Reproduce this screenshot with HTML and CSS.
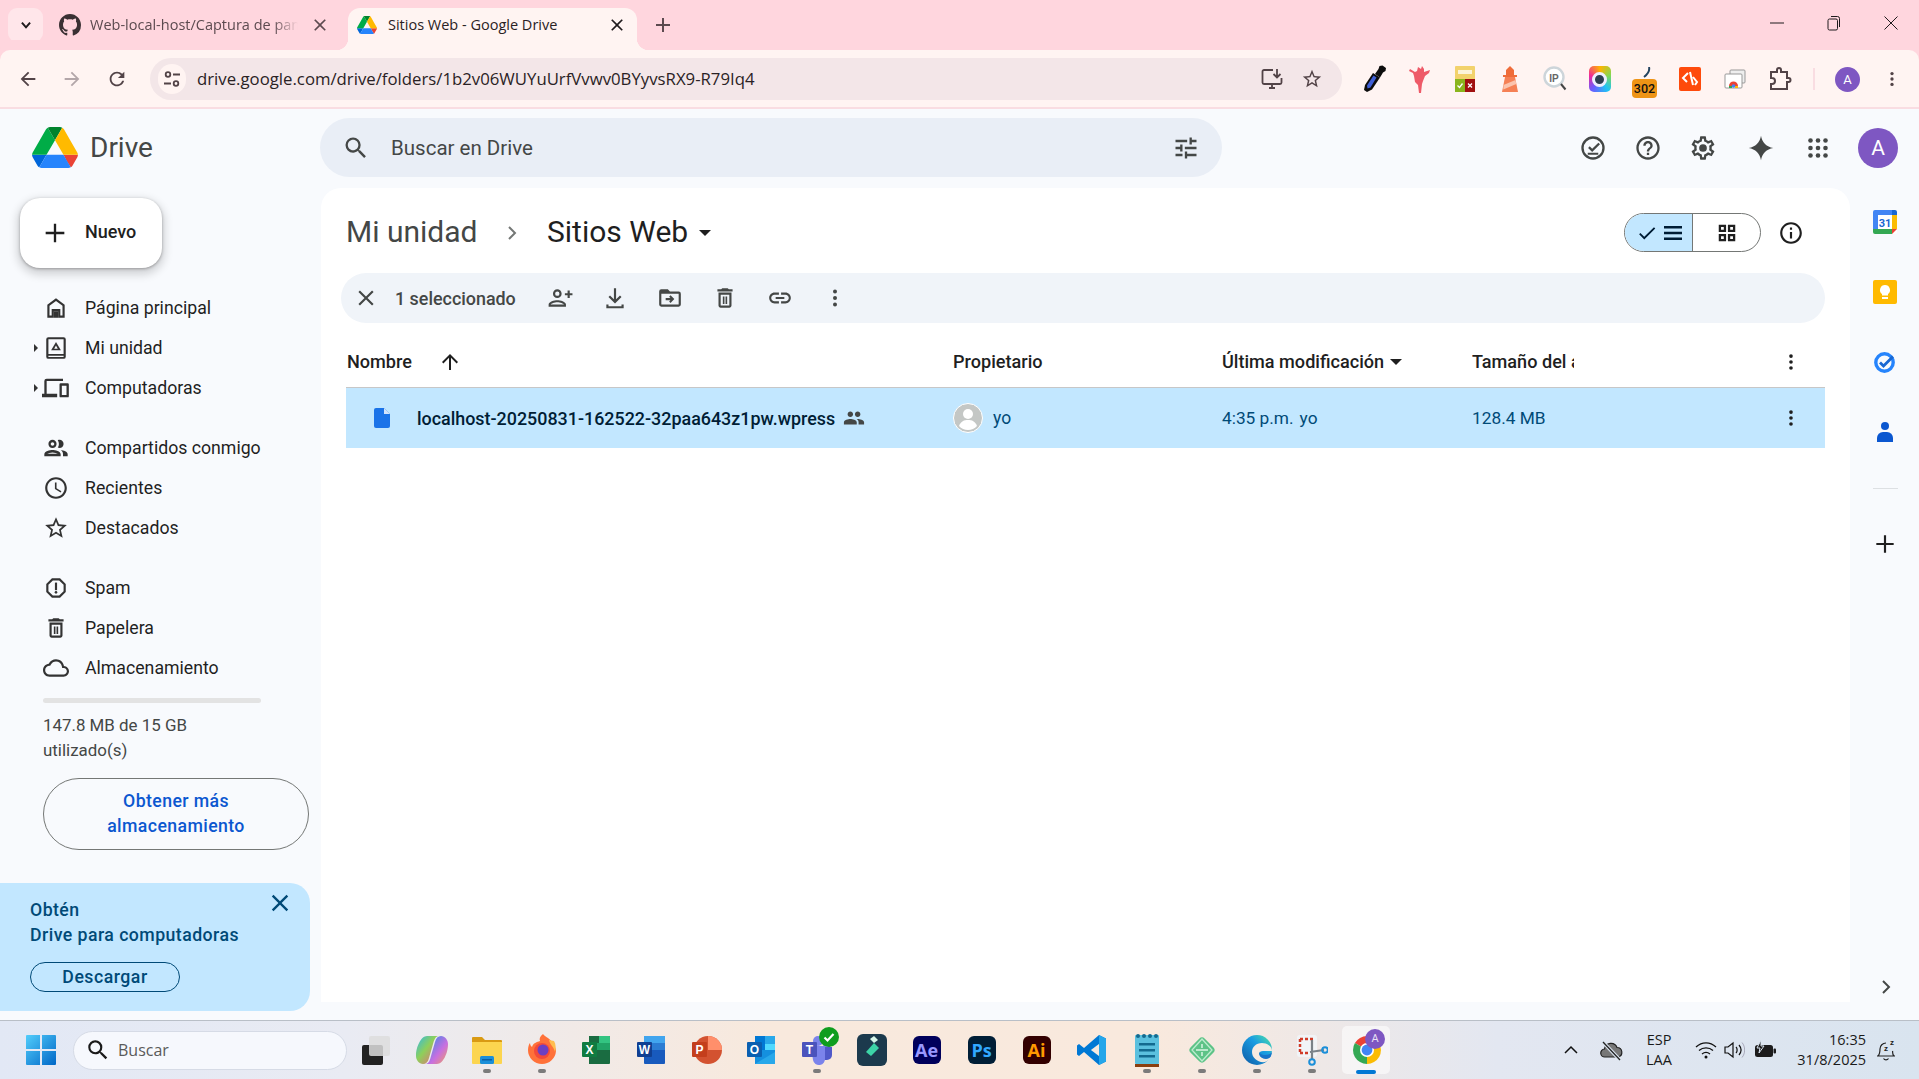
FILE: index.html
```html
<!DOCTYPE html>
<html lang="es">
<head>
<meta charset="utf-8">
<title>Sitios Web - Google Drive</title>
<link rel="stylesheet" href="styles.css">
</head>
<body>
<svg class="defs" aria-hidden="true">
  <symbol id="i-x" viewBox="0 0 24 24"><path d="M19 6.41 17.59 5 12 10.59 6.41 5 5 6.41 10.59 12 5 17.59 6.41 19 12 13.41 17.59 19 19 17.59 13.41 12z"/></symbol>
  <symbol id="i-vert" viewBox="0 0 24 24"><circle cx="12" cy="5.5" r="2"/><circle cx="12" cy="12" r="2"/><circle cx="12" cy="18.5" r="2"/></symbol>
  <symbol id="i-search" viewBox="0 0 24 24"><path d="M15.5 14h-.79l-.28-.27A6.471 6.471 0 0 0 16 9.5 6.5 6.5 0 1 0 9.5 16c1.61 0 3.09-.59 4.23-1.57l.27.28v.79l5 4.99L20.49 19l-4.99-5zm-6 0C7.01 14 5 11.99 5 9.5S7.01 5 9.5 5 14 7.01 14 9.5 11.99 14 9.5 14z"/></symbol>
  <symbol id="i-drive" viewBox="0 0 87.3 78"><path d="m6.6 66.85 3.85 6.65c.8 1.4 1.95 2.5 3.3 3.3l13.75-23.8h-27.5c0 1.55.4 3.1 1.2 4.5z" fill="#0066da"/><path d="m43.65 25-13.75-23.8c-1.35.8-2.5 1.9-3.3 3.3l-25.4 44a9.06 9.06 0 0 0 -1.2 4.5h27.5z" fill="#00ac47"/><path d="m73.55 76.8c1.35-.8 2.5-1.9 3.3-3.3l1.6-2.75 7.65-13.25c.8-1.4 1.2-2.95 1.2-4.5h-27.502l5.852 11.5z" fill="#ea4335"/><path d="m43.65 25 13.75-23.8c-1.35-.8-2.9-1.2-4.5-1.2h-18.5c-1.6 0-3.15.45-4.5 1.2z" fill="#00832d"/><path d="m59.8 53h-32.3l-13.75 23.8c1.35.8 2.9 1.2 4.5 1.2h50.8c1.6 0 3.15-.45 4.5-1.2z" fill="#2684fc"/><path d="m73.4 26.5-12.7-22c-.8-1.4-1.95-2.5-3.3-3.3l-13.75 23.8 16.15 28h27.45c0-1.55-.4-3.1-1.2-4.5z" fill="#ffba00"/></symbol>
  <symbol id="i-chrome" viewBox="0 0 32 32"><path d="M16 16 3.9 9A14 14 0 0 1 28.1 9Z" fill="#ea4335"/><path d="M16 16 28.1 9A14 14 0 0 1 16 30Z" fill="#fbbc04"/><path d="M16 16 16 30A14 14 0 0 1 3.9 9Z" fill="#34a853"/><circle cx="16" cy="16" r="7" fill="#fff"/><circle cx="16" cy="16" r="5.4" fill="#4285f4"/></symbol>
</svg>

<div class="tabstrip">
  <div class="tab-list-btn"><svg width="14" height="14" viewBox="0 0 24 24" class="stroke-dark"><path d="M5 8l7 8 7-8" fill="none" stroke-width="3.4"/></svg></div>
  <div class="tab tab-idle">
    <svg class="tab-icon" width="22" height="22" viewBox="0 0 16 16"><path fill="#3a3033" d="M8 0C3.58 0 0 3.58 0 8c0 3.54 2.29 6.53 5.47 7.59.4.07.55-.17.55-.38 0-.19-.01-.82-.01-1.49-2.01.37-2.53-.49-2.69-.94-.09-.23-.48-.94-.82-1.13-.28-.15-.68-.52-.01-.53.63-.01 1.08.58 1.23.82.72 1.21 1.87.87 2.33.66.07-.52.28-.87.51-1.07-1.78-.2-3.64-.89-3.64-3.95 0-.87.31-1.59.82-2.15-.08-.2-.36-1.02.08-2.12 0 0 .67-.21 2.2.82.64-.18 1.32-.27 2-.27s1.36.09 2 .27c1.53-1.04 2.2-.82 2.2-.82.44 1.1.16 1.92.08 2.12.51.56.82 1.27.82 2.15 0 3.07-1.87 3.75-3.65 3.95.29.25.54.73.54 1.48 0 1.07-.01 1.93-.01 2.2 0 .21.15.46.55.38A8.01 8.01 0 0 0 16 8c0-4.42-3.58-8-8-8z"/></svg>
    <span class="tab-title tab-title-fade">Web-local-host/Captura de pantalla</span>
    <svg class="tab-close fill-muted" width="20" height="20"><use href="#i-x"/></svg>
  </div>
  <div class="tab tab-active">
    <svg class="tab-icon-sm" width="20" height="18"><use href="#i-drive"/></svg>
    <span class="tab-title">Sitios Web - Google Drive</span>
    <svg class="tab-close fill-dark" width="20" height="20"><use href="#i-x"/></svg>
  </div>
  <svg class="new-tab fill-muted" width="24" height="24" viewBox="0 0 24 24"><path d="M13 5h-2v6H5v2h6v6h2v-6h6v-2h-6z"/></svg>
  <div class="win-controls">
    <svg width="16" height="16" viewBox="0 0 16 16" class="stroke-dark"><path d="M1 8h14" fill="none"/></svg>
    <svg width="16" height="16" viewBox="0 0 16 16" class="stroke-dark"><rect x="2" y="4" width="9.5" height="11" rx="1.5" fill="none"/><path d="M5 1.5h6.500a2 2 0 0 1 2 2V12" fill="none"/></svg>
    <svg width="16" height="16" viewBox="0 0 16 16" class="stroke-dark"><path d="M1.500 1.500l13 13M14.500 1.500l-13 13" fill="none"/></svg>
  </div>
</div>

<div class="toolbar">
  <div class="nav-btn"><svg width="22" height="22" viewBox="0 0 24 24" class="fill-chrome"><path d="M20 11H7.830l5.590-5.590L12 4l-8 8 8 8 1.410-1.410L7.830 13H20z"/></svg></div>
  <div class="nav-btn"><svg width="22" height="22" viewBox="0 0 24 24" class="fill-disabled"><path d="M12 4l-1.410 1.410L16.170 11H4v2h12.170l-5.580 5.590L12 20l8-8z"/></svg></div>
  <div class="nav-btn nav-reload"><svg width="22" height="22" viewBox="0 0 24 24" class="fill-chrome"><path d="M17.650 6.350A7.958 7.958 0 0 0 12 4c-4.420 0-7.990 3.580-7.990 8s3.570 8 7.990 8c3.730 0 6.840-2.550 7.730-6h-2.080A5.990 5.990 0 0 1 12 18c-3.310 0-6-2.690-6-6s2.690-6 6-6c1.660 0 3.140.690 4.220 1.780L13 11h7V4l-2.350 2.350z"/></svg></div>
  <div class="omnibox">
    <div class="site-info"><svg width="20" height="20" viewBox="0 0 20 20" class="stroke-chrome"><circle cx="6" cy="5.500" r="2.300" fill="none"/><path d="M11 5.500h7M2 14.500h7" fill="none"/><circle cx="14" cy="14.500" r="2.300" fill="none"/></svg></div>
    <span class="url">drive.google.com/drive/folders/1b2v06WUYuUrfVvwv0BYyvsRX9-R79Iq4</span>
    <div class="omni-btn"><svg width="24" height="24" viewBox="0 0 24 24" class="stroke-chrome"><path d="M13 3H4a1.500 1.500 0 0 0-1.500 1.500v11A1.500 1.500 0 0 0 4 17h16a1.500 1.500 0 0 0 1.500-1.500V11M9 21h6M12 17v4M17 2v8M13.500 7l3.500 3.500L20.500 7" fill="none"/></svg></div>
    <div class="omni-btn"><svg width="22" height="22" viewBox="0 0 24 24" class="fill-chrome"><path d="M22 9.240l-7.190-.620L12 2 9.190 8.630 2 9.240l5.460 4.730L5.820 21 12 17.270 18.180 21l-1.630-7.030L22 9.240zM12 15.400l-3.760 2.270 1-4.280-3.320-2.880 4.380-.380L12 6.100l1.710 4.040 4.380.380-3.320 2.880 1 4.280L12 15.400z"/></svg></div>
  </div>
  <div class="extensions">
    <div class="ext"><svg width="26" height="28" viewBox="0 0 26 28"><path d="M5 27l-3-2 1-5 8-12 7 4.500-8 12z" fill="#0d0d0d"/><path d="M5.500 23.500l-.5-3 6.500-10 3 2-6 10z" fill="#3f5fd6"/><path d="M13 9l3.500-5 1-3 3-.5 3.500 2.500-.5 3-2.500 1.500-3 5z" fill="#0d0d0d"/></svg></div>
    <div class="ext"><svg width="24" height="28" viewBox="0 0 24 28"><path d="M2 4l5 3 2-1 1-4 3 2 1-3 2 3v3l6-2-1 3-4 3-2 5-1 3-1 9h-2l-1-8-3-3-1-6-1-3-4-2z" fill="#ee5a68"/></svg></div>
    <div class="ext"><svg width="20" height="26" viewBox="0 0 20 26"><rect y="0" width="20" height="26" rx="1" fill="#f2d26c"/><rect y="13" width="10" height="13" fill="#8ab51d"/><rect x="10" y="13" width="10" height="13" fill="#a01010"/><path d="M2.500 19.500l2 2 3-4" stroke="#fff" stroke-width="1.300" fill="none"/><path d="M13 17.500l4 4m0-4l-4 4" stroke="#fff" stroke-width="1.300"/><rect x="3" y="4" width="14" height="4" fill="#fff" opacity=".75"/></svg></div>
    <div class="ext"><svg width="18" height="26" viewBox="0 0 18 26"><path d="M9 0l4 4v5H5V4z" fill="#ef6c3a"/><path d="M2 9h14v2H2z" fill="#ef6c3a"/><path d="M4 11h10l3 15H1z" fill="#f58055"/><path d="M2.500 19l12-5 .8 4-13 5.500z" fill="#fbc4ae"/></svg></div>
    <div class="ext"><svg width="24" height="28" viewBox="0 0 24 28"><circle cx="11" cy="12" r="9.500" fill="#fff" stroke="#cdd5da" stroke-width="2.400"/><text x="11" y="16.500" class="ext-ip">IP</text><path d="M18 19l4.500 5.500" stroke="#444" stroke-width="2"/></svg></div>
    <div class="ext"><div class="ext-lens"><span class="ext-lens-in"></span></div></div>
    <div class="ext ext-redirect">
      <svg width="12" height="12" viewBox="0 0 12 12"><path d="M8 0c1 4-1 7-5 10" stroke="#23435f" stroke-width="2" fill="none"/></svg>
      <span class="ext-302">302</span>
    </div>
    <div class="ext"><svg width="22" height="24" viewBox="0 0 22 24"><rect width="22" height="24" rx="2" fill="#fe4a0b"/><path d="M9 6L4 11l4 4M11 5l3 13M14 10l4 5-2 3" stroke="#fff" stroke-width="2" fill="none"/></svg></div>
    <div class="ext"><svg width="22" height="22" viewBox="0 0 22 22"><rect x="6" y="2" width="15" height="13" rx="1" fill="#eee" stroke="#999"/><rect x="1" y="6" width="17" height="14" rx="1" fill="#fff" stroke="#999"/><path d="M5 18a4.500 4.500 0 0 1 9 0z" fill="#ea4335"/><path d="M5 18h3v2H5z" fill="#34a853"/><path d="M11 18h3v2h-3z" fill="#fbbc04"/><circle cx="9.500" cy="18" r="1.800" fill="#4285f4"/></svg></div>
    <div class="ext"><svg width="24" height="26" viewBox="0 0 24 26" class="stroke-ext"><path d="M3 6h6V4a2 2 0 0 1 4 0v2h6v6h1.500a2 2 0 0 1 0 4H19v7H3v-5h1a3 3 0 0 0 0-6H3z" fill="none" stroke-width="2"/></svg></div>
  </div>
  <span class="tb-sep"></span>
  <span class="avatar-sm">A</span>
  <svg class="tb-more fill-chrome" width="20" height="20"><use href="#i-vert"/></svg>
</div>

<div class="drive">
  <header class="topbar">
    <div class="brand">
      <svg class="brand-logo" width="46" height="41"><use href="#i-drive"/></svg>
      <span class="brand-name">Drive</span>
    </div>
    <div class="search">
      <svg class="fill-icon" width="28" height="28"><use href="#i-search"/></svg>
      <span class="search-text">Buscar en Drive</span>
      <svg class="fill-icon" width="28" height="28" viewBox="0 0 24 24"><path d="M3 17v2h6v-2H3zM3 5v2h10V5H3zm10 16v-2h8v-2h-8v-2h-2v6h2zM7 9v2H3v2h4v2h2V9H7zm14 4v-2H11v2h10zm-6-4h2V7h4V5h-4V3h-2v6z"/></svg>
    </div>
    <div class="top-actions">
      <div class="act"><svg class="fill-icon" width="28" height="28" viewBox="0 0 24 24"><path d="M12 2a10 10 0 1 0 0 20 10 10 0 0 0 0-20zm0 18a8 8 0 1 1 0-16 8 8 0 0 1 0 16z"/><path d="M16.600 7.400l1.400 1.400-6.700 6.700-3.500-3.500 1.400-1.400 2.100 2.100zM7.500 16h9v1.800h-9z"/></svg></div>
      <div class="act"><svg class="fill-icon" width="28" height="28" viewBox="0 0 24 24"><path d="M11 18h2v-2h-2v2zm1-16C6.480 2 2 6.480 2 12s4.480 10 10 10 10-4.480 10-10S17.520 2 12 2zm0 18c-4.410 0-8-3.590-8-8s3.590-8 8-8 8 3.590 8 8-3.590 8-8 8zm0-14c-2.210 0-4 1.790-4 4h2c0-1.100.9-2 2-2s2 .9 2 2c0 2-3 1.750-3 5h2c0-2.250 3-2.500 3-5 0-2.210-1.790-4-4-4z"/></svg></div>
      <div class="act"><svg class="fill-icon" width="28" height="28" viewBox="0 0 24 24"><path d="M19.430 12.980c.04-.32.07-.64.07-.98 0-.34-.03-.66-.07-.98l2.110-1.650c.19-.15.24-.42.12-.64l-2-3.460c-.09-.16-.26-.25-.44-.25-.06 0-.12.01-.17.03l-2.490 1c-.52-.4-1.080-.73-1.690-.98l-.38-2.650C14.460 2.180 14.250 2 14 2h-4c-.25 0-.46.18-.49.42l-.38 2.650c-.61.25-1.170.59-1.690.98l-2.490-1c-.06-.02-.12-.03-.18-.03-.17 0-.34.09-.43.25l-2 3.460c-.13.22-.07.49.12.64l2.110 1.650c-.04.32-.07.65-.07.98 0 .33.03.66.07.98l-2.110 1.650c-.19.15-.24.42-.12.64l2 3.460c.09.16.26.25.44.25.06 0 .12-.01.17-.03l2.490-1c.52.4 1.080.73 1.690.98l.38 2.650c.03.24.24.42.49.42h4c.25 0 .46-.18.49-.42l.38-2.650c.61-.25 1.170-.59 1.690-.98l2.490 1c.06.02.12.03.18.03.17 0 .34-.09.43-.25l2-3.460c.12-.22.07-.49-.12-.64l-2.110-1.650zm-1.980-1.710c.04.31.05.52.05.73 0 .21-.02.43-.05.73l-.14 1.130.89.7 1.080.84-.7 1.210-1.270-.51-1.040-.42-.9.68c-.43.32-.84.56-1.250.73l-1.060.43-.16 1.130-.2 1.350h-1.400l-.19-1.350-.16-1.130-1.060-.43c-.43-.18-.83-.41-1.230-.71l-.91-.7-1.060.43-1.270.51-.7-1.210 1.080-.84.89-.7-.14-1.130c-.03-.31-.05-.54-.05-.74s.02-.43.05-.73l.14-1.130-.89-.7-1.080-.84.7-1.210 1.270.51 1.040.42.9-.68c.43-.32.84-.56 1.250-.73l1.060-.43.16-1.130.2-1.350h1.390l.19 1.350.16 1.130 1.060.43c.43.18.83.41 1.230.71l.91.7 1.060-.43 1.270-.51.7 1.210-1.070.85-.89.7.14 1.130z"/><circle cx="12" cy="12" r="3.300"/></svg></div>
      <div class="act act-wide"><svg class="fill-icon" width="28" height="28" viewBox="0 0 24 24"><path d="M12 1.500c.8 5.600 4.900 9.700 10.500 10.500-5.600.8-9.700 4.900-10.500 10.500C11.200 16.900 7.100 12.800 1.500 12 7.100 11.200 11.200 7.100 12 1.500z"/></svg></div>
      <div class="act act-narrow"><svg class="fill-icon" width="24" height="24" viewBox="0 0 24 24"><circle cx="4.500" cy="4.500" r="2.300"/><circle cx="12" cy="4.500" r="2.300"/><circle cx="19.500" cy="4.500" r="2.300"/><circle cx="4.500" cy="12" r="2.300"/><circle cx="12" cy="12" r="2.300"/><circle cx="19.500" cy="12" r="2.300"/><circle cx="4.500" cy="19.500" r="2.300"/><circle cx="12" cy="19.500" r="2.300"/><circle cx="19.500" cy="19.500" r="2.300"/></svg></div>
      <span class="avatar-lg">A</span>
    </div>
  </header>

  <div class="workspace">
    <aside class="sidebar">
      <div class="new-btn">
        <svg class="fill-title" width="28" height="28" viewBox="0 0 24 24"><path d="M13 4h-2v7H4v2h7v7h2v-7h7v-2h-7z"/></svg>
        <span class="new-label">Nuevo</span>
      </div>
      <nav class="nav-group">
        <div class="nav-item"><span class="nav-icon"><svg class="fill-icon2" width="26" height="26" viewBox="0 0 24 24"><path d="M12 3 4 9v12h6v-6h4v6h6V9l-8-6zm6 16h-2v-6H8v6H6v-9l6-4.500 6 4.500v9z"/><rect x="10" y="15" width="4" height="6"/></svg></span><span>Página principal</span></div>
        <div class="nav-item"><span class="nav-caret"></span><span class="nav-icon"><svg class="fill-icon2" width="26" height="26" viewBox="0 0 24 24"><path d="M19 2H5a2 2 0 0 0-2 2V20a2 2 0 0 0 2 2h14a2 2 0 0 0 2-2V4a2 2 0 0 0-2-2zm0 15.500H5V4h14v13.500zm0 2.800H5v-1.200h14v1.200z"/><path d="M12 6.500l4.500 7.500h-9z"/><path d="M12 9.800l-1.700 2.800h3.400z" fill="#f8fafd"/></svg></span><span>Mi unidad</span></div>
        <div class="nav-item"><span class="nav-caret"></span><span class="nav-icon"><svg class="fill-icon2" width="28" height="28" viewBox="0 0 24 24"><path d="M4 6h14V4H4a2 2 0 0 0-2 2v11H0v3h13v-3H4V6z"/><path d="M22 8h-6a1 1 0 0 0-1 1v10a1 1 0 0 0 1 1h6a1 1 0 0 0 1-1V9a1 1 0 0 0-1-1zm-1 10h-4v-8h4v8z"/></svg></span><span>Computadoras</span></div>
      </nav>
      <nav class="nav-group">
        <div class="nav-item"><span class="nav-icon"><svg class="fill-icon2" width="28" height="28" viewBox="0 0 24 24"><path d="M9 13.750c-2.340 0-7 1.170-7 3.500V19h14v-1.750c0-2.330-4.660-3.500-7-3.500zM4.340 17c.84-.58 2.870-1.250 4.660-1.250s3.820.67 4.660 1.250H4.340zM9 12c1.930 0 3.500-1.570 3.500-3.500S10.930 5 9 5 5.500 6.570 5.500 8.500 7.070 12 9 12zm0-5c.83 0 1.500.67 1.500 1.500S9.830 10 9 10s-1.500-.67-1.500-1.500S8.170 7 9 7zm7.040 6.810c1.160.84 1.960 1.960 1.960 3.440V19h4v-1.750c0-2.020-3.500-3.170-5.960-3.440zM15 12c1.930 0 3.500-1.570 3.500-3.500S16.930 5 15 5c-.54 0-1.040.13-1.500.35.63.89 1 1.980 1 3.150s-.37 2.260-1 3.150c.46.22.96.35 1.500.35z"/></svg></span><span>Compartidos conmigo</span></div>
        <div class="nav-item"><span class="nav-icon"><svg class="fill-icon2" width="26" height="26" viewBox="0 0 24 24"><path d="M11.990 2C6.470 2 2 6.480 2 12s4.470 10 9.990 10C17.520 22 22 17.520 22 12S17.520 2 11.990 2zM12 20c-4.420 0-8-3.580-8-8s3.580-8 8-8 8 3.580 8 8-3.580 8-8 8zm.5-13H11v6l5.250 3.150.75-1.230-4.500-2.670z"/></svg></span><span>Recientes</span></div>
        <div class="nav-item"><span class="nav-icon"><svg class="fill-icon2" width="26" height="26" viewBox="0 0 24 24"><path d="M22 9.240l-7.190-.62L12 2 9.190 8.630 2 9.240l5.460 4.730L5.820 21 12 17.270 18.180 21l-1.630-7.030L22 9.240zM12 15.400l-3.760 2.270 1-4.280-3.320-2.880 4.380-.38L12 6.100l1.710 4.040 4.380.38-3.320 2.880 1 4.280L12 15.400z"/></svg></span><span>Destacados</span></div>
      </nav>
      <nav class="nav-group">
        <div class="nav-item"><span class="nav-icon"><svg class="fill-icon2" width="26" height="26" viewBox="0 0 24 24"><path d="M15.730 3H8.270L3 8.270v7.460L8.270 21h7.460L21 15.730V8.270L15.730 3zM19 14.900 14.900 19H9.100L5 14.900V9.100L9.100 5h5.800L19 9.100v5.800z"/><circle cx="12" cy="16" r="1.200"/><rect x="11" y="7" width="2" height="7"/></svg></span><span>Spam</span></div>
        <div class="nav-item"><span class="nav-icon"><svg class="fill-icon2" width="26" height="26" viewBox="0 0 24 24"><path d="M6 19c0 1.100.9 2 2 2h8c1.100 0 2-.9 2-2V7H6v12zM8 9h8v10H8V9zm7.500-5l-1-1h-5l-1 1H5v2h14V4z"/><path d="M10 10.500h1.500v7H10zM12.500 10.500H14v7h-1.500z"/></svg></span><span>Papelera</span></div>
        <div class="nav-item"><span class="nav-icon"><svg class="fill-icon2" width="26" height="26" viewBox="0 0 24 24"><path d="M19.350 10.040C18.670 6.590 15.640 4 12 4 9.110 4 6.600 5.640 5.350 8.040 2.340 8.360 0 10.910 0 14c0 3.310 2.690 6 6 6h13c2.760 0 5-2.240 5-5 0-2.640-2.050-4.780-4.650-4.960zM19 18H6c-2.210 0-4-1.790-4-4 0-2.050 1.530-3.760 3.560-3.970l1.070-.11.5-.95C8.080 7.140 9.940 6 12 6c2.620 0 4.880 1.860 5.390 4.430l.3 1.500 1.530.11c1.560.1 2.780 1.410 2.780 2.960 0 1.650-1.350 3-3 3z"/></svg></span><span>Almacenamiento</span></div>
      </nav>
      <div class="storage-bar"></div>
      <p class="storage-text">147.8 MB de 15 GB utilizado(s)</p>
      <div class="storage-btn">Obtener más almacenamiento</div>
      <div class="promo">
        <div class="promo-head">
          <p class="promo-text">Obtén<br>Drive para computadoras</p>
          <svg class="promo-close fill-promo" width="28" height="28"><use href="#i-x"/></svg>
        </div>
        <div class="promo-btn">Descargar</div>
      </div>
    </aside>

    <main class="card">
      <div class="title-row">
        <span class="crumb">Mi unidad</span>
        <svg class="crumb-sep" width="24" height="24" viewBox="0 0 24 24"><path d="M9.300 6.700 10.700 5.300 17.400 12l-6.700 6.700-1.400-1.400L14.600 12z"/></svg>
        <span class="crumb-current">Sitios Web</span>
        <span class="caret caret-lg"></span>
        <div class="view-toggle">
          <div class="view-on">
            <svg width="22" height="22" viewBox="0 0 24 24" class="fill-navy"><path d="M9 16.200 4.800 12l-1.400 1.400L9 19 21 7l-1.400-1.400z"/></svg>
            <svg width="24" height="24" viewBox="0 0 24 24" class="fill-navy"><path d="M3 5h18v2.500H3zM3 10.700h18v2.500H3zM3 16.500h18V19H3z"/></svg>
          </div>
          <div class="view-off"><svg width="22" height="22" viewBox="0 0 24 24" class="fill-title"><path d="M3 3h8v8H3zm2.500 2.500v3h3v-3zM13 3h8v8h-8zm2.500 2.500v3h3v-3zM3 13h8v8H3zm2.500 2.500v3h3v-3zM13 13h8v8h-8zm2.500 2.500v3h3v-3z"/></svg></div>
        </div>
        <div class="info-btn"><svg width="26" height="26" viewBox="0 0 24 24" class="fill-title"><path d="M11 7h2v2h-2zm0 4h2v6h-2zm1-9C6.480 2 2 6.480 2 12s4.480 10 10 10 10-4.480 10-10S17.520 2 12 2zm0 18c-4.410 0-8-3.590-8-8s3.590-8 8-8 8 3.590 8 8-3.590 8-8 8z"/></svg></div>
      </div>

      <div class="select-bar">
        <svg class="sel-close fill-icon" width="26" height="26"><use href="#i-x"/></svg>
        <span class="sel-count">1 seleccionado</span>
        <div class="sel-act"><svg class="fill-icon" width="26" height="26" viewBox="0 0 24 24"><path d="M9.500 12a4 4 0 1 0 0-8 4 4 0 0 0 0 8zm0-6a2 2 0 1 1 0 4 2 2 0 0 1 0-4zM9.500 14c-2.700 0-8 1.300-8 4v2h16v-2c0-2.700-5.300-4-8-4zm-6 4c.2-.7 3.300-2 6-2s5.800 1.300 6 2z"/><path d="M19 5v2.500h-2.500v2H19V12h2V9.500h2.500v-2H21V5z"/></svg></div>
        <div class="sel-act"><svg class="fill-icon" width="26" height="26" viewBox="0 0 24 24"><path d="M11 3h2v10.200l3.600-3.600L18 11l-6 6-6-6 1.400-1.400 3.600 3.600z"/><path d="M4 18h2v1.500h12V18h2v3.500H4z"/></svg></div>
        <div class="sel-act"><svg class="fill-icon" width="26" height="26" viewBox="0 0 24 24"><path d="M20 6h-8l-2-2H4a2 2 0 0 0-2 2v12a2 2 0 0 0 2 2h16a2 2 0 0 0 2-2V8a2 2 0 0 0-2-2zm0 12H4V8h16v10z"/><path d="M12.500 9.500 16 13l-3.500 3.500-1.300-1.300 1.200-1.200H8v-2h4.400l-1.200-1.200z"/></svg></div>
        <div class="sel-act"><svg class="fill-icon" width="26" height="26" viewBox="0 0 24 24"><path d="M6 19c0 1.100.9 2 2 2h8c1.100 0 2-.9 2-2V7H6v12zM8 9h8v10H8V9zm7.500-5l-1-1h-5l-1 1H5v2h14V4z"/><path d="M10 10.500h1.500v7H10zM12.500 10.500H14v7h-1.500z"/></svg></div>
        <div class="sel-act"><svg class="fill-icon" width="26" height="26" viewBox="0 0 24 24"><path d="M3.900 12c0-1.710 1.390-3.100 3.100-3.100h4V7H7c-2.760 0-5 2.240-5 5s2.240 5 5 5h4v-1.900H7c-1.710 0-3.100-1.390-3.100-3.100zM8 13h8v-2H8v2zm9-6h-4v1.900h4c1.710 0 3.100 1.390 3.100 3.100s-1.390 3.100-3.100 3.100h-4V17h4c2.760 0 5-2.240 5-5s-2.240-5-5-5z"/></svg></div>
        <div class="sel-act"><svg class="fill-icon" width="24" height="24"><use href="#i-vert"/></svg></div>
      </div>

      <div class="table">
        <div class="t-row t-head">
          <div class="cell-name head-name"><span>Nombre</span><svg class="fill-title sort-up" width="24" height="24" viewBox="0 0 24 24"><path d="M11 20V7.800l-5.600 5.600L4 12l8-8 8 8-1.400 1.400L13 7.800V20z"/></svg></div>
          <div>Propietario</div>
          <div class="head-mod"><span>Última modificación</span><span class="caret"></span></div>
          <div class="head-size">Tamaño del almacenamiento</div>
          <svg class="row-more fill-title" width="22" height="22"><use href="#i-vert"/></svg>
        </div>
        <div class="t-row t-file">
          <div class="cell-name file-name">
            <svg class="file-icon" width="24" height="24" viewBox="0 0 24 24"><path d="M6 2a2 2 0 0 0-2 2v16a2 2 0 0 0 2 2h12a2 2 0 0 0 2-2V8l-6-6z" fill="#1a73e8"/><path d="M14 2l6 6h-6z" fill="#d2e3fc"/></svg>
            <span>localhost-20250831-162522-32paa643z1pw.wpress</span>
            <svg class="fill-icon shared-icon" width="24" height="24" viewBox="0 0 24 24"><path d="M16 11c1.660 0 2.990-1.340 2.990-3S17.660 5 16 5s-3 1.340-3 3 1.340 3 3 3zm-8 0c1.660 0 2.990-1.340 2.990-3S9.660 5 8 5 5 6.340 5 8s1.340 3 3 3zm0 2c-2.330 0-7 1.170-7 3.500V19h14v-2.500c0-2.330-4.670-3.500-7-3.500zm8 0c-.29 0-.62.020-.97.050 1.160.84 1.970 1.970 1.970 3.450V19h6v-2.500c0-2.330-4.670-3.500-7-3.500z"/></svg>
          </div>
          <div class="owner">
            <svg width="30" height="30" viewBox="0 0 30 30"><circle cx="15" cy="15" r="14.500" fill="#c4c7c5" stroke="#fff"/><circle cx="15" cy="11" r="5" fill="#fff"/><path d="M6 23c2-5 5-6 9-6s7 1 9 6a12 12 0 0 1-18 0z" fill="#fff"/></svg>
            <span>yo</span>
          </div>
          <div class="cell-meta"><span>4:35 p.m.</span><span class="meta-by">yo</span></div>
          <div class="cell-meta">128.4 MB</div>
          <svg class="row-more fill-title" width="22" height="22"><use href="#i-vert"/></svg>
        </div>
      </div>
    </main>

    <aside class="rail">
      <div class="rail-slot"><svg width="24" height="24" viewBox="0 0 24 24"><rect width="24" height="24" rx="2" fill="#fff"/><path d="M0 2a2 2 0 0 1 2-2h17v5H5v14H0z" fill="#4285f4"/><path d="M19 0h3a2 2 0 0 1 2 2v3h-5z" fill="#1967d2"/><path d="M19 5h5v14h-5z" fill="#fbbc04"/><path d="M5 19h14v5H2a2 2 0 0 1-2-2v-3h5z" fill="#34a853"/><path d="M19 19h5l-5 5z" fill="#ea4335"/><text x="12" y="16.500" class="cal-num">31</text></svg></div>
      <div class="rail-slot"><svg width="24" height="24" viewBox="0 0 24 24"><rect width="24" height="24" rx="2" fill="#ffba00"/><path d="M12 5a5 5 0 0 0-3 9v1.500h6V14a5 5 0 0 0-3-9z" fill="#fff"/><rect x="9" y="17" width="6" height="2" fill="#fff"/></svg></div>
      <div class="rail-slot"><svg width="24" height="24" viewBox="0 0 24 24"><circle cx="11.500" cy="12.500" r="8.700" fill="none" stroke="#2684fc" stroke-width="3.400"/><path d="M7 12.500l3.500 3.500L20 6.500" fill="none" stroke="#1967d2" stroke-width="2.800"/></svg></div>
      <div class="rail-slot"><svg width="24" height="24" viewBox="0 0 24 24"><circle cx="12" cy="6" r="4" fill="#0b57d0"/><path d="M4 22v-4a6 6 0 0 1 6-6h4a6 6 0 0 1 6 6v4z" fill="#0b57d0"/></svg></div>
      <span class="rail-sep"></span>
      <div class="rail-slot rail-plus"><svg width="26" height="26" viewBox="0 0 24 24" class="fill-title"><path d="M13 4h-2v7H4v2h7v7h2v-7h7v-2h-7z"/></svg></div>
      <svg class="rail-chev fill-icon" width="24" height="24" viewBox="0 0 24 24"><path d="M9.300 6.700 10.700 5.300 17.400 12l-6.700 6.700-1.400-1.400L14.600 12z"/></svg>
    </aside>
  </div>
</div>

<footer class="taskbar">
  <svg class="win-logo" width="30" height="30" viewBox="0 0 30 30">
    <defs><linearGradient id="win" x1="0" y1="0" x2="1" y2="1"><stop offset="0" stop-color="#52cdfb"/><stop offset="1" stop-color="#0067c7"/></linearGradient></defs>
    <path d="M1 0h13v14H0V1a1 1 0 0 1 1-1zM16 0h13a1 1 0 0 1 1 1v13H16zM0 16h14v14H1a1 1 0 0 1-1-1zM16 16h14v13a1 1 0 0 1-1 1H16z" fill="url(#win)"/>
  </svg>
  <div class="tb-search">
    <svg class="fill-black" width="26" height="26"><use href="#i-search"/></svg>
    <span>Buscar</span>
  </div>
  <div class="tb-apps">
    <div class="app"><svg width="32" height="32" viewBox="0 0 32 32"><rect x="1" y="11" width="21" height="20" rx="2" fill="#222"/><rect x="8" y="2" width="21" height="20" rx="2" fill="#ddd" opacity=".85"/></svg></div>
    <div class="app"><svg width="32" height="32" viewBox="0 0 32 32"><defs><linearGradient id="cop" x1="0" y1="0" x2="1" y2="1"><stop offset="0" stop-color="#2fb9e8"/><stop offset=".45" stop-color="#8ed05a"/><stop offset="1" stop-color="#f25f7f"/></linearGradient><linearGradient id="cop2" x1="0" y1="0" x2="1" y2="1"><stop offset="0" stop-color="#1f8fe8"/><stop offset=".6" stop-color="#c86fe0"/><stop offset="1" stop-color="#f2a05a"/></linearGradient></defs><path d="M11 2h11c-3 1-4 4-5 8l-4 14c-1 4-3 6-6 6-4 0-7-4-7-8C0 13 5 2 11 2z" fill="url(#cop)"/><path d="M21 30H10c3-1 4-4 5-8l4-14c1-4 3-6 6-6 4 0 7 4 7 8 0 9-5 20-11 20z" fill="url(#cop2)"/></svg></div>
    <div class="app app-open"><svg width="32" height="32" viewBox="0 0 32 32"><path d="M1 4a1 1 0 0 1 1-1h9l3 3h16a1 1 0 0 1 1 1v4H1z" fill="#d99a13"/><path d="M1 8h30v21a1 1 0 0 1-1 1H2a1 1 0 0 1-1-1z" fill="#fcd54f"/><rect x="9" y="22" width="14" height="8" rx="1.500" fill="#1b8fd9"/><rect x="11" y="25" width="10" height="1.500" fill="#0b5fa5"/></svg></div>
    <div class="app app-open"><svg width="32" height="32" viewBox="0 0 32 32"><path d="M16 30a14 14 0 0 1-14-14c0-3 1-6 2-7 0 2 1 3 2 4 1-4 5-5 8-6-1-2 0-5 3-7 2 3 5 3 9 8 3 4 4 7 4 9a14 14 0 0 1-14 13z" fill="#ff7139"/><path d="M28 7c2 3 2 8 1 11-1-5-5-7-6-12z" fill="#ffbd4f"/><circle cx="16" cy="17" r="8" fill="#f24a3a"/><circle cx="17" cy="16" r="5.500" fill="#6c3fc2"/></svg></div>
    <div class="app"><svg width="32" height="32" viewBox="0 0 32 32"><path d="M8 2h20a1 1 0 0 1 1 1v26a1 1 0 0 1-1 1H8z" fill="#1a6c41"/><path d="M18 2h10a1 1 0 0 1 1 1v6H18z" fill="#33c481"/><path d="M18 9h11v7H18z" fill="#21a366"/><path d="M8 9h10v7H8z" fill="#21a366"/><rect x="1" y="8" width="15" height="15" rx="1" fill="#107c41"/><text x="8.500" y="20" class="app-letter">X</text></svg></div>
    <div class="app"><svg width="32" height="32" viewBox="0 0 32 32"><path d="M8 2h20a1 1 0 0 1 1 1v26a1 1 0 0 1-1 1H9a1 1 0 0 1-1-1z" fill="#185abd"/><path d="M8 2h21v7H8z" fill="#41a5ee"/><path d="M8 9h21v7H8z" fill="#2b7cd3"/><rect x="1" y="8" width="15" height="15" rx="1" fill="#103f91"/><text x="8.500" y="20" class="app-letter">W</text></svg></div>
    <div class="app"><svg width="32" height="32" viewBox="0 0 32 32"><circle cx="17" cy="16" r="14" fill="#d35230"/><path d="M17 2a14 14 0 0 1 14 14H17z" fill="#ff8f6b"/><rect x="1" y="8" width="15" height="15" rx="1" fill="#c43e1c"/><text x="8.500" y="20" class="app-letter">P</text></svg></div>
    <div class="app"><svg width="32" height="32" viewBox="0 0 32 32"><path d="M9 2h19a1 1 0 0 1 1 1v26H9z" fill="#0078d4"/><path d="M19 2h10v8H19z" fill="#28a8ea"/><path d="M19 10h10v8H19z" fill="#50d9ff"/><path d="M9 16l20 0v13a1 1 0 0 1-1 1H9z" fill="#1490df"/><path d="M9 30l20-12v11a1 1 0 0 1-1 1z" fill="#28a8ea"/><rect x="1" y="8" width="15" height="15" rx="1" fill="#0a5fb0"/><text x="8.500" y="20" class="app-letter">O</text></svg></div>
    <div class="app app-open app-badge"><svg width="32" height="32" viewBox="0 0 32 32"><circle cx="26" cy="10" r="4" fill="#7b83eb"/><path d="M16 13h15v8a5 5 0 0 1-5 5h-10z" fill="#5059c9"/><path d="M10 12h14v12a6 6 0 0 1-12 2z" fill="#7b83eb"/><circle cx="17" cy="7" r="5" fill="#7b83eb"/><rect x="1" y="8" width="15" height="15" rx="1" fill="#4b53bc"/><text x="8.500" y="20" class="app-letter">T</text></svg><span class="badge-check"><svg width="20" height="20" viewBox="0 0 20 20"><circle cx="10" cy="10" r="10" fill="#0f9d1e"/><path d="M5.500 10.500l3 3 6-6.500" stroke="#fff" stroke-width="2.200" fill="none"/></svg></span></div>
    <div class="app"><svg width="30" height="32" viewBox="0 0 30 32"><rect width="30" height="32" rx="6" fill="#1c3a4d"/><path d="M13 5l4-3 4 4-4 3z" fill="#d6f5e8"/><path d="M9 18l8-9 5 5-8 8z" fill="#3dd4a7"/></svg></div>
    <div class="app"><span class="app-tile tile-ae">Ae</span></div>
    <div class="app"><span class="app-tile tile-ps">Ps</span></div>
    <div class="app"><span class="app-tile tile-ai">Ai</span></div>
    <div class="app"><svg width="32" height="32" viewBox="0 0 32 32"><path d="M23 1l7 3.500v23L23 31 8 18l-5 4-2-1.500V11.500L3 10l5 4z" fill="#0078d4"/><path d="M23 1l7 3.500v23L23 31V22l-8-6 8-6z" fill="#25a6ea"/><path d="M23 10v12l-8-6z" fill="#f6e9df"/></svg></div>
    <div class="app app-open"><svg width="28" height="34" viewBox="0 0 28 34"><rect x="2" y="2" width="24" height="29" rx="1" fill="#5bc0de"/><path d="M2 31h24v3H2z" fill="#8a3f10"/><rect x="6" y="10" width="16" height="2.500" fill="#136a8f"/><rect x="6" y="16" width="16" height="2.500" fill="#136a8f"/><rect x="6" y="22" width="16" height="2.500" fill="#136a8f"/><g fill="#136a8f"><circle cx="5" cy="3" r="2"/><circle cx="11" cy="3" r="2"/><circle cx="17" cy="3" r="2"/><circle cx="23" cy="3" r="2"/></g></svg></div>
    <div class="app app-open"><svg width="32" height="32" viewBox="0 0 32 32"><rect x="6" y="6" width="20" height="20" rx="4" transform="rotate(45 16 16)" fill="#5dc387"/><path d="M16 5l10 11-10 11L6 16z" fill="none" stroke="#bdeccf" stroke-width="1.300"/><path d="M10 16h12M16 10v4M16 18v4" stroke="#d9f5e4" stroke-width="1.500"/></svg></div>
    <div class="app app-open"><svg width="32" height="34" viewBox="0 0 32 32"><defs><linearGradient id="edge" x1="0" y1="1" x2="1" y2="0"><stop offset="0" stop-color="#0c59a4"/><stop offset=".6" stop-color="#1b9de2"/><stop offset="1" stop-color="#50e6a0"/></linearGradient></defs><circle cx="16" cy="16" r="15" fill="url(#edge)"/><path d="M31 17c0-5-5-8-10-8-6 0-10 4-10 9 0 6 6 11 13 10 3-1 5-3 6-5-4 2-11 2-12-3 0-2 2-3 4-3h9z" fill="#f7ebe1"/><path d="M31 18c-1 2-4 3-7 3-4 0-6-2-6-4 0 5 3 8 7 8 2 0 4-1 5-3z" fill="#1a73c8"/></svg></div>
    <div class="app app-open"><svg width="32" height="32" viewBox="0 0 32 32"><rect x="1" y="1" width="20" height="22" rx="3" fill="#f1f4f7"/><path d="M4 5h3M9 5h3M14 5h3M4 5v3M4 10v3M4 15v3M4 19h3M9 19h3" stroke="#d13c28" stroke-width="2.500"/><path d="M16 6v19M14 18l14-2" stroke="#7a8288" stroke-width="2.200"/><circle cx="16" cy="28" r="2.800" fill="none" stroke="#1b8fd9" stroke-width="2"/><circle cx="29" cy="16" r="2.800" fill="none" stroke="#1b8fd9" stroke-width="2"/></svg></div>
    <div class="app app-active"><svg width="32" height="32"><use href="#i-chrome"/></svg><span class="chrome-badge">A</span></div>
  </div>
  <div class="tray">
    <svg class="tray-chev stroke-black" width="16" height="16" viewBox="0 0 16 16"><path d="M2 11l6-6 6 6" fill="none" stroke-width="1.500"/></svg>
    <svg class="tray-cloud" width="24" height="24" viewBox="0 0 24 24"><path d="M6 19a4 4 0 0 1-.5-8A6.500 6.500 0 0 1 18 9.500a4.800 4.800 0 0 1 1 9.500z" fill="#777" stroke="#222" stroke-width="1.200"/><path d="M3 3l18 19" stroke="#dbe5f0" stroke-width="3.500"/><path d="M4 4l17 18" stroke="#222" stroke-width="1.300"/></svg>
    <div class="tray-lang"><span>ESP</span><span>LAA</span></div>
    <svg class="tray-wifi stroke-black" width="22" height="22" viewBox="0 0 22 22"><path d="M1 8c6-5.500 14-5.500 20 0M4 11.500c4-3.500 10-3.500 14 0M7 15c2.500-2 5.500-2 8 0" fill="none" stroke-width="1.300"/><circle cx="11" cy="18" r="1.500" fill="#111" stroke="none"/></svg>
    <svg class="tray-vol stroke-black" width="22" height="22" viewBox="0 0 22 22"><path d="M2 8v6h3l5 4V4L5 8z" fill="none" stroke-width="1.200"/><path d="M13 8c1.500 1.500 1.500 4.500 0 6M16 6c2.500 3 2.500 7 0 10" fill="none" stroke-width="1.200"/><path d="M19 3.500c3.500 4 3.500 11 0 15" fill="none" stroke="#aab" stroke-width="1"/></svg>
    <svg class="tray-bat" width="24" height="22" viewBox="0 0 24 22"><rect x="2" y="6" width="18" height="12" rx="2.500" fill="#1c1c1c"/><rect x="20.500" y="9.500" width="2.500" height="5" rx="1" fill="#1c1c1c"/><path d="M8 1L4 9h3l-1 5 5-7H8z" fill="#1c1c1c" stroke="#dbe5f0" stroke-width="1"/></svg>
    <div class="tray-clock"><span>16:35</span><span>31/8/2025</span></div>
    <svg class="tray-bell" width="22" height="24" viewBox="0 0 22 24"><path d="M3 18c2-2 2-4 2-7a6 6 0 0 1 6-6M19 18c-2-2-1-3-1.500-5M2 18h18M8.500 20.500a3 3 0 0 0 5 0" fill="none" stroke="#222" stroke-width="1.200"/><text x="11" y="13" class="bell-z">z</text><text x="17" y="7" class="bell-z">z</text></svg>
  </div>
</footer>
</body>
</html>
```

FILE: styles.css
```css
* { box-sizing: border-box; }
html, body { margin: 0; padding: 0; height: 100%; }
body {
  width: 1919px;
  height: 1079px;
  overflow: hidden;
  display: flex;
  flex-direction: column;
  font-family: Roboto, "Liberation Sans", sans-serif;
  color: #1f1f1f;
  background: #f8fafd;
}
p { margin: 0; }
svg { display: block; flex: none; }
.defs { display: none; }

.fill-muted { fill: #5c4a4f; }
.fill-dark { fill: #1f1a1c; }
.fill-chrome { fill: #524347; }
.fill-disabled { fill: #b3a6a9; }
.fill-icon { fill: #444746; }
.fill-icon2 { fill: #333; }
.fill-title { fill: #1f1f1f; }
.fill-navy { fill: #001d35; }
.fill-promo { fill: #004a77; }
.fill-black { fill: #1a1a1a; }
.stroke-dark { stroke: #1f1a1c; fill: none; }
.stroke-chrome { stroke: #524347; stroke-width: 1.800; fill: none; }
.stroke-ext { stroke: #524347; fill: none; }
.stroke-black { stroke: #111; }

/* Tab strip */
.tabstrip {
  height: 50px;
  flex: none;
  display: flex;
  align-items: flex-start;
  padding: 8px 0 0 8px;
  background: #ffd6de;
}
.tab-list-btn {
  width: 35px;
  height: 34px;
  border-radius: 9px;
  background: #ffe6ea;
  display: flex;
  align-items: center;
  justify-content: center;
}
.tab {
  height: 42px;
  display: flex;
  align-items: center;
  font: 14.5px/20px "Open Sans", sans-serif;
}
.tab-idle { width: 300px; margin-left: 5px; padding: 0 18px 8px 11px; color: #5c4a4f; }
.tab-active {
  position: relative;
  width: 289px;
  padding: 0 10px 8px 9px;
  background: #fff4f2;
  border-radius: 12px 12px 0 0;
  color: #2a2224;
}
.tab-active::before,
.tab-active::after {
  content: "";
  position: absolute;
  bottom: 0;
  width: 12px;
  height: 12px;
}
.tab-active::before { left: -12px; background: radial-gradient(circle at 0 0, transparent 12px, #fff4f2 12.500px); }
.tab-active::after { right: -12px; background: radial-gradient(circle at 100% 0, transparent 12px, #fff4f2 12.500px); }
.tab-icon { margin-right: 9px; }
.tab-icon-sm { margin-right: 11px; }
.tab-title { flex: 1; min-width: 0; white-space: nowrap; overflow: hidden; }
.tab-title-fade { -webkit-mask-image: linear-gradient(90deg, #000 88%, transparent); mask-image: linear-gradient(90deg, #000 88%, transparent); }
.tab-close { margin-left: 12px; }
.new-tab { margin: 5px 0 0 14px; }
.win-controls {
  margin-left: auto;
  display: flex;
  gap: 41px;
  padding: 7px 20px 0 0;
}

/* Toolbar */
.toolbar {
  height: 59px;
  flex: none;
  display: flex;
  align-items: center;
  padding: 1px 0 0 6px;
  background: #fff4f2;
  border-bottom: 2px solid #f9dde2;
  border-radius: 10px 10px 0 0;
  box-shadow: 0 -10px 0 0 #ffd6de;
}
.nav-btn { width: 44px; height: 40px; display: flex; align-items: center; justify-content: center; }
.nav-reload { padding-left: 2px; }
.omnibox {
  width: 1192px;
  height: 42px;
  margin-left: 12px;
  display: flex;
  align-items: center;
  padding: 0 10px 0 8px;
  background: #f3e6e8;
  border-radius: 21px;
}
.site-info {
  width: 28px;
  height: 30px;
  border-radius: 15px;
  background: #fff4f2;
  display: flex;
  align-items: center;
  justify-content: center;
}
.url {
  flex: 1;
  margin-left: 11px;
  font: 16.750px/22px "Open Sans", sans-serif;
  color: #2a2224;
  white-space: nowrap;
  overflow: hidden;
}
.omni-btn { width: 40px; display: flex; justify-content: center; }
.extensions { display: flex; margin-left: 10px; }
.ext {
  position: relative;
  width: 45px;
  height: 40px;
  display: flex;
  align-items: center;
  justify-content: center;
}
.ext-ip { font: 700 10px "Liberation Sans", sans-serif; fill: #666; text-anchor: middle; }
.ext-lens {
  width: 22px;
  height: 26px;
  border-radius: 5px;
  background: conic-gradient(#ffb300, #7ed957, #20c4f4, #6a5cff, #f0269c, #ffb300);
  display: flex;
  align-items: center;
  justify-content: center;
}
.ext-lens-in { width: 15px; height: 15px; border-radius: 50%; background: #2c3e50; border: 3px solid #eef; }
.ext-redirect { flex-direction: column; justify-content: flex-start; padding-top: 8px; }
.ext-redirect svg { margin-left: 4px; }
.ext-302 {
  width: 25px;
  height: 19px;
  flex: none;
  border-radius: 4px;
  background: #ee9416;
  color: #111;
  font: 500 12.500px/19px Roboto, sans-serif;
  text-align: center;
}
.tb-sep { width: 2px; height: 22px; margin-left: 11px; background: #f9dde2; }
.avatar-sm {
  width: 25px;
  height: 25px;
  margin-left: 20px;
  border-radius: 50%;
  background: #7e57c2;
  color: #fff;
  font: 13px/25px Roboto, sans-serif;
  text-align: center;
}
.tb-more { margin-left: 22px; }

/* Drive */
.drive { flex: 1; min-height: 0; display: flex; flex-direction: column; background: #f8fafd; }
.topbar { height: 79px; flex: none; display: flex; align-items: flex-start; padding-top: 9px; }
.brand { width: 320px; flex: none; display: flex; align-items: center; height: 59px; padding-left: 32px; }
.brand-logo { margin-right: 12px; }
.brand-name { font-size: 28px; color: #444746; }
.search {
  width: 902px;
  flex: none;
  height: 59px;
  display: flex;
  align-items: center;
  padding: 0 22px;
  border-radius: 30px;
  background: #e9eef6;
}
.search-text { flex: 1; margin-left: 21px; font-size: 20.500px; color: #444746; }
.top-actions { flex: 1; height: 59px; display: flex; align-items: center; justify-content: flex-end; padding-right: 21px; }
.act { width: 55px; display: flex; justify-content: center; }
.act-wide { width: 61px; }
.act-narrow { width: 53px; }
.avatar-lg {
  width: 40px;
  height: 40px;
  margin-left: 14px;
  border-radius: 50%;
  background: #7e57c2;
  color: #fff;
  font-size: 21px;
  line-height: 40px;
  text-align: center;
}

.workspace { flex: 1; min-height: 0; display: flex; }

/* Sidebar */
.sidebar { width: 321px; flex: none; display: flex; flex-direction: column; font-size: 17.700px; }
.new-btn {
  width: 142px;
  height: 70px;
  margin: 10px 0 0 20px;
  display: flex;
  align-items: center;
  padding-left: 21px;
  gap: 16px;
  border-radius: 20px;
  background: #fff;
  box-shadow: 0 1px 3px rgba(0,0,0,.3), 0 4px 8px 3px rgba(0,0,0,.15);
  font-size: 18px;
  font-weight: 500;
}
.new-label { padding-bottom: 3px; }
.nav-group { margin-top: 20px; }
.nav-item { position: relative; height: 40px; display: flex; align-items: center; padding-left: 85px; white-space: nowrap; }
.nav-icon { position: absolute; left: 36px; width: 40px; display: flex; justify-content: center; }
.nav-caret {
  position: absolute;
  left: 34px;
  border-left: 4px solid #333;
  border-top: 4px solid transparent;
  border-bottom: 4px solid transparent;
}
.storage-bar { width: 218px; height: 5px; margin: 10px 0 0 43px; border-radius: 3px; background: #e3e3e3; }
.storage-text { width: 200px; margin: 10px 0 0 43px; font-size: 16.900px; line-height: 25px; color: #444746; }
.storage-btn {
  width: 266px;
  height: 72px;
  margin: 15px 0 0 43px;
  padding: 0 45px;
  display: flex;
  align-items: center;
  justify-content: center;
  border: 1px solid #747775;
  border-radius: 36px;
  color: #0b57d0;
  font-weight: 500;
  letter-spacing: .4px;
  line-height: 25px;
  text-align: center;
}
.promo {
  width: 310px;
  height: 128px;
  margin-top: 33px;
  padding: 15px 16px 0 30px;
  border-radius: 0 20px 20px 0;
  background: #c2e7ff;
  color: #004a77;
}
.promo-head { display: flex; justify-content: space-between; }
.promo-close { margin-top: -9px; }
.promo-text { font-weight: 500; line-height: 25px; letter-spacing: .45px; white-space: nowrap; }
.promo-btn {
  width: 150px;
  height: 30px;
  margin-top: 14px;
  border: 1px solid #004a77;
  border-radius: 15px;
  font-weight: 500;
  line-height: 28px;
  text-align: center;
  letter-spacing: .5px;
}

/* Card */
.card {
  width: 1529px;
  flex: none;
  margin-bottom: 18px;
  padding-top: 25px;
  border-radius: 20px 20px 0 0;
  background: #fff;
}
.title-row { height: 39px; display: flex; align-items: center; padding: 0 39px 0 25px; }
.crumb { width: 131px; padding-bottom: 2px; font-size: 30px; color: #444746; white-space: nowrap; }
.crumb-sep { margin-left: 22px; fill: #747775; }
.crumb-current { margin-left: 24px; padding-bottom: 2px; font-size: 30px; white-space: nowrap; }
.caret { display: inline-block; border-top: 6px solid #1f1f1f; border-left: 6px solid transparent; border-right: 6px solid transparent; }
.caret-lg { margin-left: 11px; }
.view-toggle {
  width: 137px;
  height: 39px;
  margin-left: auto;
  display: flex;
  border: 1px solid #747775;
  border-radius: 20px;
  overflow: hidden;
}
.view-on {
  width: 68px;
  display: flex;
  align-items: center;
  justify-content: center;
  gap: 3px;
  padding-left: 3px;
  background: #c2e7ff;
  border-right: 1px solid #747775;
}
.view-off { flex: 1; display: flex; align-items: center; justify-content: center; }
.info-btn { width: 40px; margin-left: 10px; display: flex; justify-content: center; }

.select-bar {
  height: 50px;
  margin: 21px 25px 0 20px;
  display: flex;
  align-items: center;
  padding-left: 12px;
  border-radius: 25px;
  background: #f0f4f9;
}
.sel-count { width: 137px; margin-left: 16px; font-size: 17.900px; font-weight: 500; color: #444746; white-space: nowrap; }
.sel-act { width: 55px; display: flex; justify-content: center; }

.table { margin: 0 25px; }
.t-row {
  display: grid;
  grid-template-columns: 607px 269px 250px 250px 1fr;
  align-items: center;
  font-size: 17.500px;
}
.t-head { height: 65px; padding-top: 13px; border-bottom: 1px solid #c7c7c7; font-size: 18.100px; font-weight: 500; }
.t-file { height: 60px; background: #c2e7ff; color: #004a77; }
.cell-name { display: flex; align-items: center; min-width: 0; }
.head-name { padding-left: 1px; color: #1f1f1f; }
.sort-up { margin-left: 26px; }
.head-mod { display: flex; align-items: center; gap: 6px; }
.head-size { width: 102px; overflow: hidden; white-space: nowrap; }
.row-more { margin-left: 58px; }
.file-name { padding-left: 24px; color: #001d35; font-size: 17.900px; font-weight: 500; white-space: nowrap; }
.file-icon { margin-right: 23px; }
.shared-icon { width: 22px; height: 22px; margin-left: 8px; }
.owner { display: flex; align-items: center; gap: 10px; }
.cell-meta { font-size: 17.300px; }
.meta-by { margin-left: 6px; }

/* Right rail */
.rail { flex: 1; display: flex; flex-direction: column; align-items: center; padding: 0 0 21px 1px; }
.rail-slot { height: 70px; flex: none; display: flex; align-items: center; justify-content: center; }
.rail-slot:first-child { margin-top: -1px; }
.rail-sep { width: 25px; height: 1px; margin-top: 21px; background: #dde0e3; }
.rail-plus { margin-top: 20px; }
.rail-chev { margin-top: auto; }
.cal-num { font: 700 11px Roboto, sans-serif; fill: #1967d2; text-anchor: middle; }

/* Taskbar */
.taskbar {
  height: 59px;
  flex: none;
  display: flex;
  align-items: center;
  padding-left: 26px;
  border-top: 1px solid #b9bfc7;
  background: linear-gradient(90deg, #e2e8f5 0%, #e9ebf3 18%, #f8e9dd 40%, #f9e9dd 60%, #e3e7f1 78%, #d9e4ef 100%);
}
.win-logo { margin-right: 17px; }
.tb-search {
  width: 274px;
  height: 39px;
  display: flex;
  align-items: center;
  padding-left: 11px;
  gap: 7px;
  border: 1px solid #d6dbe6;
  border-radius: 20px;
  background: #f6f8fd;
  font: 16px "Open Sans", sans-serif;
  color: #5a5a5a;
}
.tb-apps { display: flex; margin-left: 2px; }
.app {
  position: relative;
  width: 55px;
  height: 48px;
  display: flex;
  align-items: center;
  justify-content: center;
}
.app-open::after {
  content: "";
  position: absolute;
  left: 23.500px;
  bottom: 1px;
  width: 8px;
  height: 4px;
  border-radius: 2px;
  background: #7b7b7b;
}
.app-active::before {
  content: "";
  position: absolute;
  left: 3px;
  right: 4px;
  top: 0;
  bottom: 0;
  border-radius: 5px;
  background: rgba(255,255,255,.55);
}
.app-active svg { position: relative; }
.app-active::after {
  content: "";
  position: absolute;
  left: 17px;
  bottom: 0;
  width: 20px;
  height: 4px;
  border-radius: 2px;
  background: #0078d4;
}
.app-letter { font: 700 12px "Liberation Sans", sans-serif; fill: #fff; text-anchor: middle; }
.badge-check { position: absolute; right: 5px; top: 1px; }
.chrome-badge {
  position: absolute;
  right: 9px;
  top: 3px;
  width: 20px;
  height: 20px;
  border-radius: 50%;
  background: #7e57c2;
  color: #e8e0f5;
  font: 11px/20px Roboto, sans-serif;
  text-align: center;
}
.app-tile {
  width: 28px;
  height: 28px;
  border-radius: 6px;
  font: 700 18px/28px "Open Sans", sans-serif;
  text-align: center;
}
.tile-ae { background: #00005b; color: #9999ff; }
.tile-ps { background: #001e36; color: #31a8ff; }
.tile-ai { background: #330000; color: #ff9a00; }
.tray {
  flex: 1;
  display: flex;
  align-items: center;
  font: 14.500px/20px "Open Sans", sans-serif;
  color: #1a1a1a;
}
.tray-chev { margin-left: 169px; }
.tray-cloud { margin-left: 20px; }
.tray-lang { width: 50px; margin-left: 11px; display: flex; flex-direction: column; align-items: center; }
.tray-wifi { margin-left: 11px; }
.tray-vol { margin-left: 6px; }
.tray-bat { margin-left: 8px; }
.tray-clock { width: 89px; display: flex; flex-direction: column; align-items: flex-end; }
.tray-bell { margin-left: 9px; }
.bell-z { font: 700 8px "Liberation Sans", sans-serif; fill: #222; text-anchor: middle; }
```
